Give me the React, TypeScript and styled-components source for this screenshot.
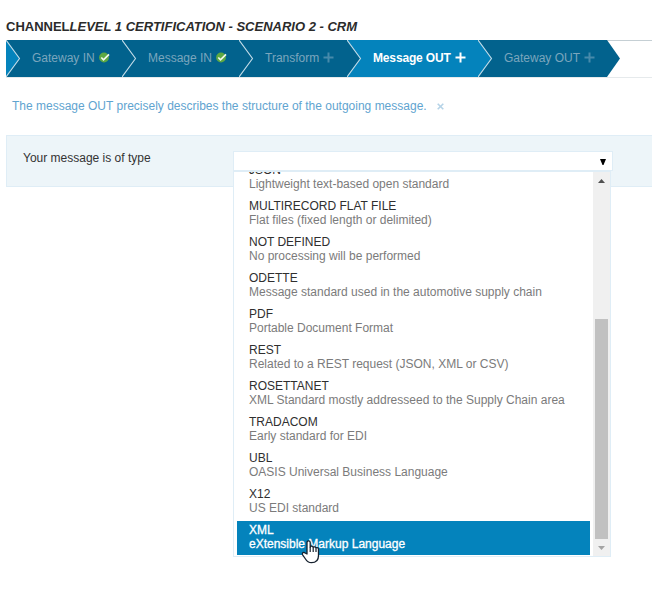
import React from "react";
import styled, { createGlobalStyle } from "styled-components";

const Global = createGlobalStyle`
  * { box-sizing: border-box; }
  body {
    margin: 0;
    background: #fff;
    color: #333;
    font: 12px/14px "Liberation Sans", Arial, sans-serif;
    overflow: hidden;
  }
`;

const Page = styled.main`
  width: 652px;
  height: 603px;
  padding: 18px 0 0 6px;
  overflow: hidden;
`;

const Title = styled.h1`
  margin: 0;
  height: 22px;
  font-size: 13px;
  line-height: 17px;
  font-weight: 700;
  white-space: nowrap;
  color: #2b2b2b;
`;

const Steps = styled.nav`
  display: flex;
  height: 38px;
  border-top: 1px solid #c5cfd4;
  border-bottom: 1px solid #e6eaec;
`;

const Step = styled.div<{ $width: number; $active?: boolean }>`
  position: relative;
  flex: none;
  display: flex;
  align-items: center;
  gap: 4px;
  width: ${(p) => p.$width}px;
  height: 37px;
  margin-top: -1px;
  padding: 0 0 2px 26px;
  white-space: nowrap;
  color: ${(p) => (p.$active ? "#fff" : "#7ba6bd")};
  font-weight: ${(p) => (p.$active ? 700 : 400)};
  letter-spacing: ${(p) => (p.$active ? "-0.15px" : "0")};
  background: ${(p) => (p.$active ? "#0483bc" : "#02628d")};
`;

const Chevron = styled.svg`
  position: absolute;
  left: 0;
  top: 0;
`;

const Tail = styled.div`
  width: 13px;
  height: 37px;
  margin-top: -1px;
  background: #02628d;
  clip-path: polygon(0 0, 100% 50%, 0 100%);
`;

const StepIcon = styled.svg`
  flex: none;
  margin-top: -1px;
`;

const Hint = styled.p`
  display: flex;
  align-items: center;
  gap: 10px;
  margin: 21px 0 0 6px;
  height: 14px;
  color: #5fa4d0;
  white-space: nowrap;
`;

const FormRow = styled.section`
  display: flex;
  height: 52px;
  margin-top: 22px;
  padding: 15px 0 0 16px;
  background: #edf5f9;
  border: 1px solid #dfedf6;
  border-right: 0;
`;

const Label = styled.label`
  width: 210px;
  flex: none;
`;

const Select = styled.div`
  position: relative;
  width: 380px;
  height: 20px;
  background: #fff;
  border: 1px solid #dfedf6;
`;

const Value = styled.div`
  display: flex;
  justify-content: flex-end;
  padding: 7px 6px 0 0;
`;

const Menu = styled.div`
  position: absolute;
  left: -1px;
  top: 18px;
  display: flex;
  width: 378px;
  height: 387px;
  background: #fff;
  border: 1px solid #dfedf6;
  border-top-width: 2px;
`;

const Options = styled.ul`
  flex: 1;
  display: flex;
  flex-direction: column;
  justify-content: flex-end;
  gap: 2px;
  margin: 0;
  padding: 0 3px 1px;
  overflow: hidden;
  list-style: none;
`;

const Option = styled.li<{ $selected?: boolean }>`
  flex: none;
  height: 34px;
  padding: 2px 0 0 12px;
  white-space: nowrap;
  background: ${(p) => (p.$selected ? "#0483bc" : "transparent")};
  color: ${(p) => (p.$selected ? "#fff" : "#2f2f2f")};
  -webkit-text-stroke: ${(p) => (p.$selected ? "0.3px #fff" : "0")};
`;

const Name = styled.div`
  height: 14px;
`;

const Description = styled.div<{ $selected?: boolean }>`
  color: ${(p) => (p.$selected ? "#fff" : "#7b7b7b")};
`;

const Scrollbar = styled.div`
  display: flex;
  flex-direction: column;
  align-items: center;
  width: 17px;
  padding: 7px 0 6px;
  background: #f0f0f0;
`;

const Thumb = styled.div`
  width: 13px;
  height: 220px;
  margin: auto 0 7px;
  background: #c1c1c1;
`;

const Pointer = styled.svg`
  position: absolute;
  left: 67px;
  top: 368px;
`;

const Check = () => (
  <StepIcon width="12" height="11" viewBox="0 0 12 11">
    <circle cx="5" cy="5.5" r="4.9" fill="#5da843" />
    <path d="M2.3 5.5 4.5 7.8 10 2.3" fill="none" stroke="#f2f8ed" strokeWidth="1.7" />
  </StepIcon>
);

const Plus = ({ color }: { color: string }) => (
  <StepIcon width="11" height="11" viewBox="0 0 11 11">
    <path d="M5.5 .5v10M.5 5.5h10" stroke={color} strokeWidth="2" />
  </StepIcon>
);

const steps = [
  { label: "Gateway IN", width: 116, done: true },
  { label: "Message IN", width: 117, done: true },
  { label: "Transform", width: 108 },
  { label: "Message OUT", width: 131, active: true },
  { label: "Gateway OUT", width: 129 },
];

const options = [
  ["JSON", "Lightweight text-based open standard"],
  ["MULTIRECORD FLAT FILE", "Flat files (fixed length or delimited)"],
  ["NOT DEFINED", "No processing will be performed"],
  ["ODETTE", "Message standard used in the automotive supply chain"],
  ["PDF", "Portable Document Format"],
  ["REST", "Related to a REST request (JSON, XML or CSV)"],
  ["ROSETTANET", "XML Standard mostly addresseed to the Supply Chain area"],
  ["TRADACOM", "Early standard for EDI"],
  ["UBL", "OASIS Universal Business Language"],
  ["X12", "US EDI standard"],
  ["XML", "eXtensible Markup Language"],
];

export default function App() {
  return (
    <Page>
      <Global />
      <Title>
        CHANNEL<em>LEVEL 1 CERTIFICATION - SCENARIO 2 - CRM</em>
      </Title>
      <Steps>
        {steps.map((s, i) => (
          <Step key={s.label} $width={s.width} $active={s.active}>
            <Chevron width="15" height="37" viewBox="0 0 15 37">
              <path
                d="M0 0 13.5 18.5 0 37z"
                fill={i === 0 || steps[i - 1].active ? "#0483bc" : "#02628d"}
              />
              <path d="M0 0 13.5 18.5 0 37" fill="none" stroke="#c3dce8" strokeWidth="1.1" />
            </Chevron>
            <span>{s.label}</span>
            {s.done ? <Check /> : <Plus color={s.active ? "#fff" : "#478aab"} />}
          </Step>
        ))}
        <Tail />
      </Steps>
      <Hint>
        <span>The message OUT precisely describes the structure of the outgoing message.</span>
        <svg width="7" height="7" viewBox="0 0 7 7">
          <path d="M.7.7 6.3 6.3M6.3.7.7 6.3" stroke="#b5d3e7" strokeWidth="1.6" />
        </svg>
      </Hint>
      <FormRow>
        <Label>Your message is of type</Label>
        <Select>
          <Value>
            <svg width="6" height="6" viewBox="0 0 6 6">
              <path d="M0 0h6L3.5 6h-1z" fill="#000" />
            </svg>
          </Value>
          <Menu>
            <Options>
              {options.map(([name, description], i) => {
                const selected = i === options.length - 1;
                return (
                  <Option key={name} $selected={selected}>
                    <Name>{name}</Name>
                    <Description $selected={selected}>{description}</Description>
                  </Option>
                );
              })}
            </Options>
            <Scrollbar>
              <svg width="7" height="4" viewBox="0 0 7 4">
                <path d="M0 4 3.5 0 7 4z" fill="#505050" />
              </svg>
              <Thumb />
              <svg width="7" height="4" viewBox="0 0 7 4">
                <path d="M0 0h7L3.5 4z" fill="#a3a3a3" />
              </svg>
            </Scrollbar>
            <Pointer width="19" height="24" viewBox="0 0 19 24">
              <path
                d="M6 14V2.6C6 .3 9.2.3 9.2 2.6V7c.3-1.3 3-1.2 3 .5.3-1.1 2.8-.9 2.8.7.3-1 2.5-.7 2.5 1V15.5c0 4.5-2.7 7.2-7 7.2-3.2 0-4.8-1.6-6-3.7L1.6 14.8c-1-1.9 1.2-3.2 2.5-1.8z"
                fill="#fff"
                stroke="#16212e"
                strokeWidth="1.3"
                strokeLinejoin="round"
              />
              <path d="M9.2 7v5M12.2 7.5V12M15 8.5V12" stroke="#16212e" strokeWidth="1.2" />
            </Pointer>
          </Menu>
        </Select>
      </FormRow>
    </Page>
  );
}
